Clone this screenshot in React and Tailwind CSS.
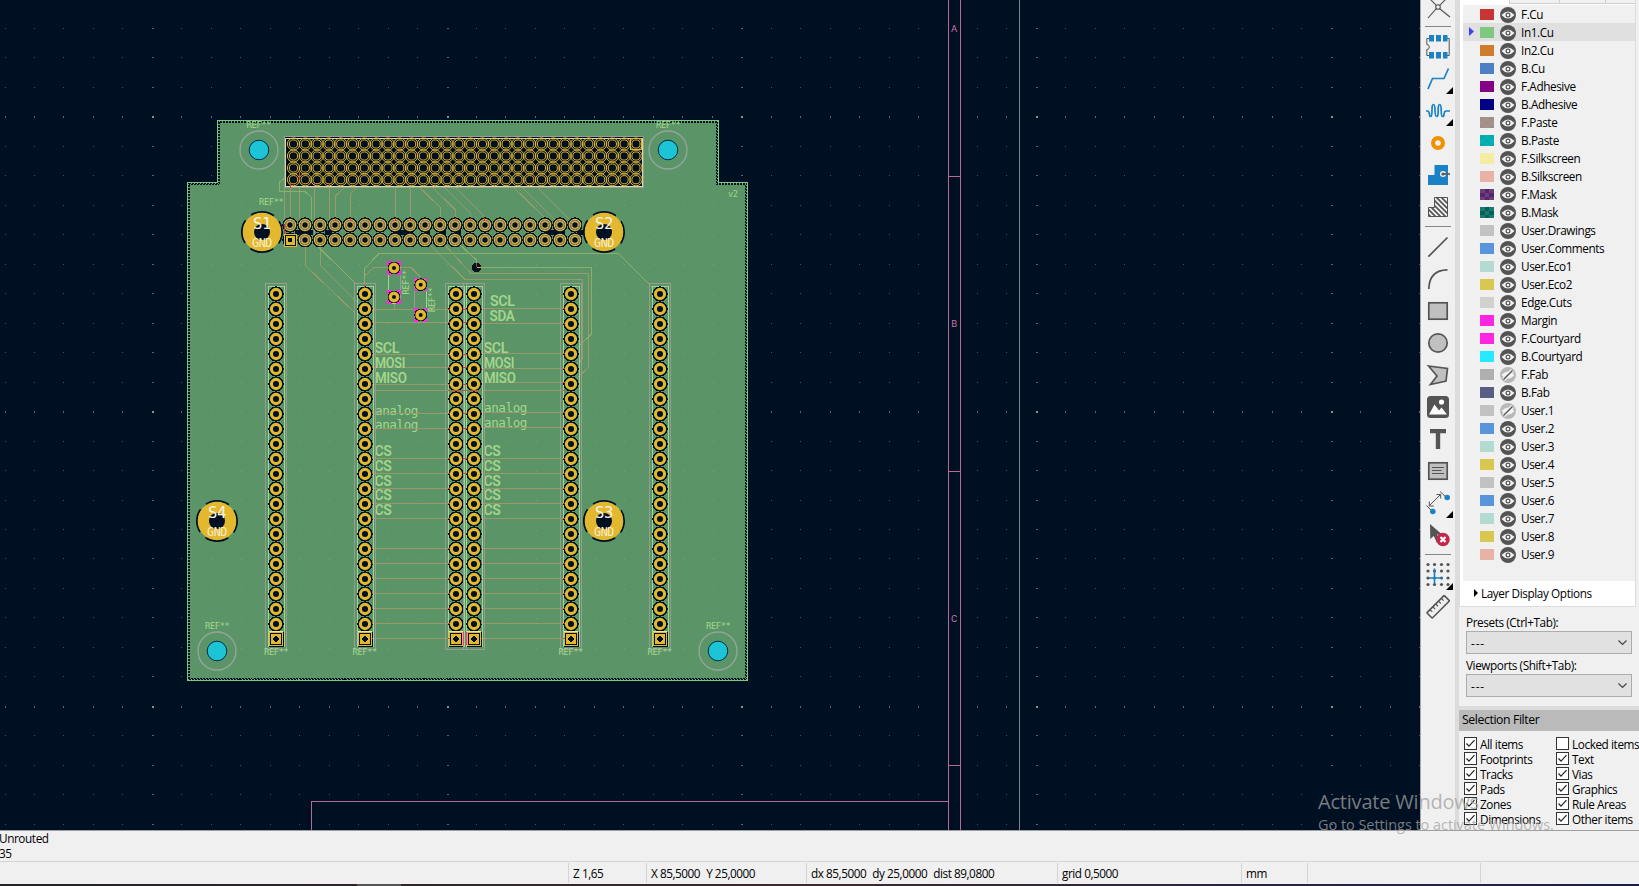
import React from "react";

const range = (n) => Array.from({ length: n }, (_, i) => i);

/* ---------- PCB canvas ---------- */

const COLS = [276, 365, 456, 474, 571, 660];
const LEFT_Y = [309.5, 322.5, 354.5, 367.5, 384.5, 390.5, 413.5, 428.5, 458.5, 473.5, 488.5, 503.5, 518.5, 548.5, 563.5, 578.5, 593.5, 608.5, 623.5, 638.5];
const RIGHT_Y = [308.5, 323.5, 353.5, 368.5, 382.5, 390.5, 412.5, 427.5, 458.5, 473.5, 488.5, 503.5, 518.5, 548.5, 563.5, 578.5, 593.5, 608.5, 623.5, 638.5];

const TRACKS = [
  "284.5,187 284.5,233",
  "290.5,183 290.5,220",
  "299.5,172 299.5,230",
  "314.5,183 314.5,243",
  "329.5,183 329.5,234 325,236",
  "320.5,244 320.5,265.5 357,302",
  "305.5,244 305.5,265.5 355,313",
  "335.5,220 335.5,196 350.5,182",
  "350.5,220 350.5,193.5 361.5,182.5",
  "395.5,188 395.5,220",
  "407.5,185 410.5,189.5 410.5,220",
  "415,183 440.5,207.5 440.5,220",
  "428,183 455.5,210 455.5,220",
  "440,183 470.5,213.5 470.5,220",
  "455,187 484.5,216.5 484.5,220",
  "508,182 545,218",
  "520,185 556,221",
  "535,185 571,221",
  "364.5,276 374,267.5 411,267.5 420.5,277",
  "430,245 465,279.5 582.5,279.5 582.5,359 576,365",
  "443,243 471,273.5 588.5,273.5 588.5,367.5 577,378",
  "394.5,303 394.5,309",
];
const LIGHT_TRACKS = [
  "286,177 279.5,182 279.5,191.5 305,191.5 311.5,197.5 311.5,240 355,283",
  "364.5,287 364.5,268.5 379,253.5 618.5,253.5 652,287",
  "458,243 476.5,260 476.5,267.5 591.5,267.5 591.5,334 577,348",
];

const MONO = "'DejaVu Sans Mono', monospace";

function Txt({ x, y, w, size = 15.5, weight = 600, fill = "#a3d68c", family = "Roboto, sans-serif", children, ...rest }) {
  return (
    <text x={x} y={y} textLength={w} lengthAdjust="spacingAndGlyphs" fontSize={size} fontWeight={weight} fill={fill} fontFamily={family} {...rest}>
      {children}
    </text>
  );
}

const Ref = ({ x, y, ...rest }) => (
  <Txt x={x} y={y} w={24.5} size={8.5} weight={400} family={MONO} {...rest}>REF**</Txt>
);

function Column({ x }) {
  return (
    <g>
      <rect x={x - 10.5} y={283.5} width={21} height={366} fill="none" stroke="#9b9a97" />
      <rect x={x - 7.5} y={286.5} width={15.5} height={360} fill="none" stroke="#a3d68c" />
      {range(23).map((i) => (
        <circle key={i} cx={x} cy={294 + i * 15} r={7.7} fill="#001023" />
      ))}
      <rect x={x - 7.5} y={631.5} width={15} height={15} fill="#001023" />
      {range(23).map((i) => (
        <circle key={i} cx={x} cy={294 + i * 15} r={4.6} fill="#001023" stroke="#e3b72e" strokeWidth={3.1} shapeRendering="auto" />
      ))}
      <rect x={x - 6.5} y={632.5} width={12.5} height={12.5} fill="#001023" stroke="#e3b72e" />
      <rect x={x - 5} y={634} width={9.5} height={9.5} fill="#e3b72e" />
      <circle cx={x} cy={639} r={2.6} fill="#001023" />
      <path d={`M${x - 7} 631.5h14`} stroke="#f0e88a" />
    </g>
  );
}

function BigPad({ x, y, name }) {
  return (
    <g>
      <circle cx={x} cy={y} r={20} fill="none" stroke="#001023" strokeWidth={2} strokeDasharray="24 7.4" strokeDashoffset={12} shapeRendering="auto" />
      <circle cx={x} cy={y} r={19.3} fill="#e3b72e" shapeRendering="auto" />
      <circle cx={x} cy={y} r={8} fill="#001023" shapeRendering="auto" />
      <Txt x={x - 9} y={y - 3.5} w={18} size={15.5} weight={400} family={MONO} fill="#f8f4e8">{name}</Txt>
      <Txt x={x - 10} y={y + 14.5} w={20} size={12} weight={400} family={MONO} fill="#f6eccb">GND</Txt>
    </g>
  );
}

const Hole = ({ x, y }) => (
  <g shapeRendering="auto">
    <circle cx={x} cy={y} r={19} fill="none" stroke="#93a59c" strokeWidth={1.4} />
    <circle cx={x} cy={y} r={10.3} fill="#1cc4d6" />
    <circle cx={x} cy={y} r={9.8} fill="none" stroke="#02263b" strokeWidth={1} />
  </g>
);

const Through = ({ x, y }) => (
  <g>
    <rect x={x - 6} y={y - 6} width={12} height={12} fill="none" stroke="#ff26e2" strokeWidth={1.2} strokeDasharray="4 4 8 4 8 4 8 4 4" />
    <circle cx={x} cy={y} r={6.4} fill="#001023" />
    <circle cx={x} cy={y} r={3.7} fill="#001023" stroke="#e3b72e" strokeWidth={3.4} shapeRendering="auto" />
  </g>
);

const BOARD = "M217.5 120.5H718.5V182.5H747.5V680.5H187.5V182.5H217.5Z";
const CLEAR = "M219 122H717V184H746V679H189V184H219Z";
const DASH = "M218.5 121.5H717.5V183.5H746.5V679.5H188.5V183.5H218.5Z";
const DASH_IN = "M219.5 122.5H716.5V184.5H745.5V678.5H189.5V184.5H219.5Z";

const PAD_Y = [144, 156, 168, 179.7];

function Board() {
  return (
    <g shapeRendering="crispEdges">
      <path d={BOARD} fill="#5b9466" stroke="#7fc882" />
      <path d={CLEAR} fill="none" stroke="#001023" strokeWidth={2} />
      <path d={DASH} fill="none" stroke="#6fae74" strokeDasharray="1 2" />
      <path d={DASH_IN} fill="none" stroke="#5b9466" strokeDasharray="1 2" strokeDashoffset={1} />
      <g fill="#74a873">
        {range(18).map((i) => range(16).map((j) => (
          <rect key={`${i}-${j}`} x={211 + Math.round(i * 29.5)} y={205 + Math.round(j * 29.5)} width={1} height={1} />
        )))}
      </g>

      {/* copper tracks */}
      <g fill="none" stroke="#99996a" strokeWidth={1}>
        {TRACKS.map((p) => <polyline key={p} points={p} />)}
        {LEFT_Y.map((y) => <path key={y} d={`M372 ${y}H449`} />)}
        {RIGHT_Y.map((y) => <path key={y} d={`M481 ${y}H564`} />)}
      </g>
      <g fill="none" stroke="#8eaf6b">{LIGHT_TRACKS.map((p) => <polyline key={p} points={p} />)}</g>

      {/* mounting holes */}
      <Hole x={259} y={150} />
      <Hole x={668} y={150} />
      <Hole x={217} y={651} />
      <Hole x={718} y={651} />

      {/* four-row connector */}
      <rect x={284.5} y={136.5} width={359} height={51} fill="#001023" stroke="#9b9a97" />
      <rect x={285.5} y={138.5} width={357} height={48} fill="none" stroke="#d3de9c" />
      <g fill="none" stroke="#e3b72e" strokeWidth={1} shapeRendering="auto">
        {range(30).map((i) => PAD_Y.map((y) => (
          <g key={`${i}-${y}`}>
            <circle cx={293.5 + i * 11.81} cy={y} r={6.1} />
            <circle cx={293.5 + i * 11.81} cy={y} r={4.1} />
          </g>
        )))}
        <rect x={630.5} y={138.5} width={11} height={11} />
      </g>

      {/* two-row header */}
      <g>
        {range(20).map((i) => range(2).map((j) => (
          <circle key={`${i}-${j}`} cx={290 + i * 15} cy={225 + j * 15} r={7.6} fill="#001023" />
        )))}
        <path d="M295 232.5H313M325 232.5H332M393 232.5H413M424 232.5H430M439 232.5H446M454 232.5H461M545 232.5H565M577 232.5H586" stroke="#001023" strokeWidth={5} />
        {range(20).map((i) => range(2).map((j) => i === 0 && j === 1 ? null : (
          <g key={`${i}-${j}`} fill="none" shapeRendering="auto">
            <circle cx={290 + i * 15} cy={225 + j * 15} r={5.6} stroke="#e3b72e" strokeWidth={1.3} />
            <circle cx={290 + i * 15} cy={225 + j * 15} r={4.4} stroke="#8288a8" strokeWidth={1.1} />
            <circle cx={290 + i * 15} cy={225 + j * 15} r={3.3} stroke="#e3b72e" strokeWidth={1.2} />
          </g>
        )))}
        <rect x={284.5} y={234.5} width={11.5} height={11.5} fill="#001023" stroke="#e3b72e" />
        <rect x={287} y={237} width={6.5} height={6.5} fill="#001023" stroke="#e3b72e" strokeWidth={2.2} />
        <path d="M284.5 224v10" stroke="#d32b2b" />
      </g>

      {/* silkscreen pin labels */}
      <Txt x={490} y={306} w={24.5}>SCL</Txt>
      <Txt x={489.5} y={321} w={25}>SDA</Txt>
      {[375, 484].map((x) => (
        <g key={x}>
          <Txt x={x - 0.5} y={353} w={24.5}>SCL</Txt>
          <Txt x={x} y={367.5} w={30}>MOSI</Txt>
          <Txt x={x} y={382.5} w={31.5}>MISO</Txt>
          <Txt x={x} y={x === 375 ? 414.5 : 412} w={43} size={12.5} weight={400} family={MONO}>analog</Txt>
          <Txt x={x} y={x === 375 ? 429 : 426.5} w={43} size={12.5} weight={400} family={MONO}>analog</Txt>
          {range(5).map((i) => <Txt key={i} x={x - 0.5} y={456 + i * 14.8} w={17}>CS</Txt>)}
        </g>
      ))}
      <g fill="none" stroke="#99996a"><path d="M375 413.5H449M375 428.5H449M484 412.5H564M484 427.5H564" /></g>

      {COLS.map((x) => <Column key={x} x={x} />)}
      <path d="M463.5 632v13M466.5 632v13" stroke="#ff26e2" />
      <g stroke="#d9432f">
        <path d="M451.5 390.5h9M469.5 390.5h9" />
        {LEFT_Y.map((y) => <path key={y} d={`M371.5 ${y}h1.5M448 ${y}h1.5`} />)}
        {LEFT_Y.slice(0, 10).map((y) => <path key={y} d={`M463 ${y}h4`} />)}
        {RIGHT_Y.map((y) => <path key={y} d={`M480.5 ${y}h1.5M563 ${y}h1.5`} />)}
        <path d="M290.5 183v5M314.5 183v3M329.5 183v3M299.5 172v8M364.5 285v3M395.5 218v3M410.5 218v3M335.5 218v3M350.5 218v3M440.5 218v3M455.5 218v3M470.5 218v3M484.5 218v3" />
      </g>

      <BigPad x={262} y={232} name="S1" />
      <BigPad x={604} y={232} name="S2" />
      <BigPad x={604} y={521} name="S3" />
      <BigPad x={217} y={521} name="S4" />

      {/* resistors and via */}
      <g fill="none">
        <path d="M388.5 262V303.5H400.5V262" stroke="#a3d68c" />
        <path d="M400.5 262V303.5" stroke="#9b9a97" />
        <path d="M414.5 279.5V321M414.5 279.5H427" stroke="#9b9a97" />
        <path d="M426.5 290V310" stroke="#a3d68c" />
      </g>
      <Through x={394} y={268} />
      <Through x={394} y={297} />
      <Through x={420.7} y={284.7} />
      <Through x={420.7} y={315} />
      <Ref x={0} y={0} transform="translate(409 294.5) rotate(-90)" />
      <Ref x={0} y={0} transform="translate(435 312) rotate(-90)" />
      <circle cx={476.5} cy={267.5} r={4.6} fill="#001023" />
      <path d="M476.5 263v4" stroke="#d32b2b" />
      <path d="M476.5 267.5h4" stroke="#e3b72e" />

      <Ref x={246.5} y={128} />
      <Ref x={656} y={128} />
      <Ref x={259} y={205} />
      <Ref x={205} y={629} />
      <Ref x={706} y={629} />
      {[264, 352.5, 558.5, 647.5].map((x) => <Ref key={x} x={x} y={655} />)}
      <Txt x={728} y={197} w={9.5} size={9.5} weight={400} family={MONO}>v2</Txt>
    </g>
  );
}

function Canvas() {
  return (
    <svg width={1420} height={830} viewBox="0 0 1420 830" className="block shrink-0 bg-[#001023]">
      <g shapeRendering="crispEdges">
        {range(49).map((i) => range(28).map((j) => {
          const mi = (i - 5) % 10 === 0;
          const mj = (j - 3) % 10 === 0;
          return (
            <rect key={`${i}-${j}`} x={Math.round(4.5 + i * 29.47)} y={Math.round(28 + j * 29.47)} width={mi ? 2 : 1} height={mj ? 2 : 1} fill={mi && mj ? "#8b9096" : mi || mj ? "#5c656d" : "#46515b"} />
          );
        }))}
        <path d="M948.5 0V830M960.5 0V830M948.5 176.5H960.5M948.5 471.5H960.5M948.5 765.5H960.5M311.5 830V801.5H948.5" fill="none" stroke="#b56a9a" />
        <path d="M1019.5 0V830" stroke="#7d858b" />
      </g>
      <g fill="#c872a5" fontSize={9.5} fontFamily="Roboto, sans-serif" textAnchor="middle">
        <text x={954} y={32}>A</text>
        <text x={954} y={327}>B</text>
        <text x={954} y={622}>C</text>
      </g>
      <Board />
    </svg>
  );
}

/* ---------- right-hand toolbar ---------- */

const D = "#545454";
const B = "#1a81c4";

const ICONS = {
  ratsnest: <g fill="none" stroke={D} strokeWidth="1.1"><circle cx="12" cy="12" r="2.3" /><path d="M10.3 10.3L2 2M13.7 10.3L22 2M10.3 13.7L2 23M13.7 13.7L24 22" /></g>,
  footprint: <g><path d="M4 3.5H.8V9.5a2.3 2.3 0 0 1 0 5V20.5H4M20 3.5h3.2V20.5H20" fill="none" stroke={D} /><path d="M3 0h5v6.5H3zM10 0h5v6.5h-5zM17 0h4.5v6.5H17zM3 17h5v6.5H3zM10 17h5v6.5h-5zM17 17h4.5v6.5H17z" fill={B} /></g>,
  route: <path d="M2 22L6.5 11.5H18L22.5 1.5" fill="none" stroke={B} strokeWidth="1.7" />,
  tune: <path d="M0 12h1.5c3 0 1 5.5 3 5.5 3 0 0-12 3-12s0 12 3.2 12c3 0 0-12 3-12s0 12 3 12c2.5 0 0-5.5 3.5-5.5H24" fill="none" stroke={B} strokeWidth="1.7" />,
  via: <circle cx="12" cy="12" r="4.9" fill="none" stroke="#f29100" strokeWidth="4.2" />,
  zone: <g><path d="M8.5 2H22v20H2V12h6.5z" fill={B} /><circle cx="17" cy="11" r="3" fill="#f0f0f0" /><path d="M16 11h8" stroke={D} strokeWidth="1.6" /><circle cx="17" cy="11" r="1.6" fill={D} /></g>,
  rule: <g><defs><clipPath id="ruleClip"><path d="M8.5 2H22v20H2V12h6.5z" /></clipPath></defs><path d="M-8 4l22 22M-3 4l22 22M2 4l22 22M-1 -4l26 26M4 -4l26 26M9 -4l26 26M-13 4l22 22" stroke={D} strokeWidth="1.7" clipPath="url(#ruleClip)" /><path d="M8.5 2.5H21.5v19H2.5V12.5h6z" fill="none" stroke={D} /></g>,
  line: <path d="M2.3 21.7L21.5 2.5" stroke={D} strokeWidth="1.7" />,
  arc: <path d="M2.8 22C3 10 9 3 21.5 2.8" fill="none" stroke={D} strokeWidth="1.7" />,
  rect: <rect x="2.8" y="3.8" width="18.4" height="16.4" fill="#c0c0c0" stroke={D} strokeWidth="1.7" />,
  circle: <circle cx="12" cy="12" r="9.2" fill="#c0c0c0" stroke={D} strokeWidth="1.7" />,
  poly: <path d="M2.5 3L21.5 5.5L20 18L4.5 21.5L11 13z" fill="#c0c0c0" stroke={D} strokeWidth="1.7" />,
  image: <g><rect x="1" y="1" width="22" height="22" rx="3.5" fill={D} /><path d="M3 19.5L8.5 9.5L13 15.5L15.5 12.5L21 19.5z" fill="#fff" /><circle cx="15.5" cy="7" r="2.6" fill="#fff" /></g>,
  text: <path d="M4 2h16v4.2h-5.8V22H9.8V6.2H4z" fill={D} />,
  textbox: <g><rect x="2.8" y="3.8" width="18.4" height="16.4" fill="#c0c0c0" stroke={D} strokeWidth="1.7" /><path d="M6 8.5h12M6 11.5h9.5M6 14.5h12" stroke={D} strokeWidth="1.1" /></g>,
  dimension: <g><path d="M3.5 14.5L14.5 3.5M3.3 10.5v4.5h4.5M10.5 3.5h4.2v4" fill="none" stroke={D} /><path d="M.5 14.5L7 21M14 .5L21 7" stroke={D} /><circle cx="6.8" cy="20.5" r="2.8" fill={B} /><circle cx="21.2" cy="6.5" r="2.8" fill={B} /></g>,
  del: <g><path d="M4 1L4.3 16L7.8 13L11 20L14 18.5L11 11.8L15.5 11z" fill={D} /><circle cx="17" cy="16.5" r="6.7" fill="#c4254a" /><path d="M14.5 14l5 5M19.5 14l-5 5" stroke="#fff" strokeWidth="2.2" /></g>,
  grid: <g><g fill={D}>{[2, 8.5, 15.5, 22].map((x) => [1.5, 8, 15, 21.5].map((y) => <circle key={`${x}-${y}`} cx={x} cy={y} r="1.6" />))}</g><path d="M8.5 5.5V21M3 15H17" stroke={B} strokeWidth="1.6" /></g>,
  ruler: <g transform="rotate(-45 12 12)" fill="none" stroke={D} strokeWidth="1.6"><rect x="0" y="8.2" width="24.5" height="7.6" rx=".6" /><path d="M4.5 8.5v3M8.5 8.5v3M12.5 8.5v3M16.5 8.5v3M20.5 8.5v3" strokeWidth="1.2" /></g>,
};

const TOOLS = ["ratsnest", "-", "footprint", "route>", "tune>", "via", "zone", "rule", "-", "line", "arc", "rect", "circle", "poly", "image", "text", "textbox", "dimension>", "del", "-", "grid>", "ruler"];

function Toolbar() {
  return (
    <div className="flex w-[35px] shrink-0 flex-col overflow-hidden border-l border-[#a8a8a8] bg-[#f0f0f0]">
      <div className="-mt-[9px] flex flex-col">
        {TOOLS.map((t, i) => {
          if (t === "-") return <div key={i} className="flex h-2 shrink-0 items-start pl-1 pt-[3px]"><div className="h-px w-[26px] bg-[#868686]" /></div>;
          const more = t.endsWith(">");
          return (
            <div key={i} className="relative flex h-8 shrink-0 items-center pl-[5px]">
              <svg width="24" height="24" viewBox="0 0 24 24" className="overflow-visible">{ICONS[t.replace(">", "")]}</svg>
              {more && <svg width="7" height="7" className="absolute bottom-[1px] left-[25px]"><path d="M7 0V7H0z" fill="#000" /></svg>}
            </div>
          );
        })}
      </div>
    </div>
  );
}

/* ---------- appearance panel ---------- */

const LAYERS = [
  ["F.Cu", "#c83434"], ["In1.Cu", "#7fc87f"], ["In2.Cu", "#ce7d2c"], ["B.Cu", "#4d7fc4"],
  ["F.Adhesive", "#840084"], ["B.Adhesive", "#000084"], ["F.Paste", "#a4928b", "#a08e87"], ["B.Paste", "#00b4b4", "#06a9a9"],
  ["F.Silkscreen", "#f2eda1"], ["B.Silkscreen", "#e8b2a7"], ["F.Mask", "#54266a", "#6d3d7f"], ["B.Mask", "#026259", "#1b7a70"],
  ["User.Drawings", "#c2c2c2"], ["User.Comments", "#5994dc"], ["User.Eco1", "#b4dbd2"], ["User.Eco2", "#d8c852"],
  ["Edge.Cuts", "#d0d2cd"], ["Margin", "#ff26e2"], ["F.Courtyard", "#ff26e2"], ["B.Courtyard", "#26e9ff"],
  ["F.Fab", "#afafaf"], ["B.Fab", "#585d84"], ["User.1", "#c2c2c2"], ["User.2", "#5994dc"], ["User.3", "#b4dbd2"],
  ["User.4", "#d8c852"], ["User.5", "#c2c2c2"], ["User.6", "#5994dc"], ["User.7", "#b4dbd2"], ["User.8", "#d8c852"], ["User.9", "#e8b2a7"],
];
const HIDDEN = ["F.Fab", "User.1"];

const Eye = () => (
  <svg width="16" height="16" viewBox="0 0 16 16">
    <circle cx="8" cy="8" r="8" fill={D} />
    <path d="M1.5 8Q8 .8 14.5 8Q8 15.2 1.5 8z" fill="#f4f4f4" />
    <circle cx="8" cy="8" r="1.9" fill="#f4f4f4" stroke={D} strokeWidth="1.2" />
  </svg>
);
const EyeOff = () => (
  <svg width="16" height="16" viewBox="0 0 16 16">
    <circle cx="8" cy="8" r="8" fill="#b8b8b8" />
    <path d="M1.5 8Q8 .8 14.5 8Q8 15.2 1.5 8z" fill="#f4f4f4" />
    <path d="M3.5 12.5L12.5 3.5" stroke="#f4f4f4" strokeWidth="4" />
    <path d="M3.5 12.5L12.5 3.5" stroke={D} strokeWidth="1.5" />
  </svg>
);

function Swatch({ a, b }) {
  return (
    <svg width="14" height="11" shapeRendering="crispEdges" className="mb-px">
      <rect width="14" height="11" fill={a} />
      {b && <path d="M0 0h5v4h-5zM9 0h5v4H9zM5 4h4v4H5zM0 8h5v3H0zM9 8h5v3H9z" fill={b} />}
    </svg>
  );
}

function Select() {
  return (
    <div className="flex h-[23px] w-[166px] items-center justify-between border border-[#adadad] bg-[#e1e1e1] pl-1 pr-1">
      <span className="tracking-[0.9px]">---</span>
      <svg width="9" height="6" viewBox="0 0 9 6"><path d="M.5 .5L4.5 4.5L8.5 .5" fill="none" stroke="#444" strokeWidth="1.2" /></svg>
    </div>
  );
}

const FILTERS = [
  ["All items", true, "Locked items", false], ["Footprints", true, "Text", true], ["Tracks", true, "Vias", true],
  ["Pads", true, "Graphics", true], ["Zones", true, "Rule Areas", true], ["Dimensions", true, "Other items", true],
];

function Check({ label, on }) {
  return (
    <div className="flex h-[15px] items-center gap-[3px] whitespace-nowrap">
      <svg width="13" height="13" viewBox="0 0 13 13" className="shrink-0">
        <rect x=".5" y=".5" width="12" height="12" fill="#fff" stroke="#333" />
        {on && <path d="M2.5 6.5L5 9.2L10.5 3.2" fill="none" stroke="#222" strokeWidth="1.2" />}
      </svg>
      <span>{label}</span>
    </div>
  );
}

function Panel() {
  return (
    <div className="flex w-[184px] shrink-0 overflow-hidden bg-[#f0f0f0]">
      <div className="w-1 shrink-0 bg-[#dcdcdc]" />
      <div className="flex w-[180px] shrink-0 flex-col">
        <div className="flex h-[607px] w-[177px] shrink-0 flex-col border-x border-b border-[#dcdcdc] bg-white">
          <div className="flex h-1 shrink-0 justify-end">
            <div className="h-full w-[50px] border-b border-l border-[#d0d0d0] bg-[#f0f0f0]" />
            <div className="h-full w-[46px] border-b border-l border-[#d0d0d0] bg-[#f0f0f0]" />
            <div className="h-full w-[30px] border-b border-l border-[#d0d0d0] bg-[#f0f0f0]" />
          </div>
          <div className="mt-px ml-[3px] flex h-[576px] w-[172px] shrink-0 flex-col bg-[#f0f0f0]">
            {LAYERS.map(([name, a, b], i) => (
              <div key={name} className={i === 1 ? "flex h-[18px] shrink-0 items-center bg-[#e0e0e0] pt-px" : "flex h-[18px] shrink-0 items-center pt-px"}>
                <div className="flex w-[17px] shrink-0 pl-[6px]">
                  {i === 1 && <svg width="5" height="9" className="mb-[2px]"><path d="M0 0L5 4.5L0 9z" fill="#4040f0" /></svg>}
                </div>
                <Swatch a={a} b={b} />
                <div className="ml-[6px] mr-[5px]">{HIDDEN.includes(name) ? <EyeOff /> : <Eye />}</div>
                <span className="pb-px">{name}</span>
              </div>
            ))}
          </div>
          <div className="flex flex-1 items-center gap-[3px] pb-[2px] pl-[14px]">
            <svg width="4" height="8"><path d="M0 0L4 4L0 8z" fill="#000" /></svg>
            <span>Layer Display Options</span>
          </div>
        </div>
        <div className="flex h-[99px] shrink-0 flex-col pl-[7px]">
          <div className="mt-[6px] flex h-[18px] items-center pb-px">Presets (Ctrl+Tab):</div>
          <Select />
          <div className="mt-[2px] flex h-[18px] items-center pb-px">Viewports (Shift+Tab):</div>
          <Select />
        </div>
        <div className="h-1 shrink-0 bg-[#dcdcdc]" />
        <div className="flex h-[21px] shrink-0 items-center bg-[#bababa] pb-px pl-[3px] text-[12.25px]">Selection Filter</div>
        <div className="flex flex-col pl-[5px] pt-[5px]">
          {FILTERS.map(([l, lo, r, ro]) => (
            <div key={l} className="flex">
              <div className="w-[92px] shrink-0"><Check label={l} on={lo} /></div>
              <Check label={r} on={ro} />
            </div>
          ))}
        </div>
      </div>
    </div>
  );
}

/* ---------- bottom bars ---------- */

function StatusBar() {
  const cell = "flex h-5 shrink-0 items-center gap-[6px] border-l border-[#d4d4d4] pl-1 pt-px";
  return (
    <div className="flex h-[22px] shrink-0 items-center border-t border-[#d4d4d4] tracking-[-0.45px]">
      <div className="w-[568px] shrink-0" />
      <div className={`${cell} w-[78px]`}>Z 1,65</div>
      <div className={`${cell} w-[160px]`}><span>X 85,5000</span><span>Y 25,0000</span></div>
      <div className={`${cell} w-[251px]`}><span>dx 85,5000</span><span>dy 25,0000</span><span>dist 89,0800</span></div>
      <div className={`${cell} w-[184px]`}>grid 0,5000</div>
      <div className={`${cell} w-[66px]`}>mm</div>
      <div className={`${cell} w-[173px]`} />
      <div className={`${cell} w-[158px]`} />
    </div>
  );
}

export default function App() {
  return (
    <div className="relative flex h-[886px] w-[1639px] flex-col overflow-hidden bg-[#f0f0f0] font-['Open_Sans','Noto_Sans',sans-serif] text-[11.75px] leading-[14px] tracking-[-0.4px] text-black">
      <div className="flex h-[830px] shrink-0">
        <Canvas />
        <Toolbar />
        <Panel />
      </div>
      <div className="flex h-[31px] shrink-0 flex-col border-t border-[#a0a0a0]">
        <div className="-ml-px h-[15px]">Unrouted</div>
        <div className="-ml-px h-[15px]">35</div>
      </div>
      <StatusBar />
      <div className="mt-px flex h-[2px] shrink-0 bg-gradient-to-r from-[#222126] via-[#3c2a30] to-[#1b1c4a]">
        <div className="ml-[357px] w-11 bg-[#555]" />
      </div>
      <div className="pointer-events-none absolute left-[1318px] top-[788px] flex flex-col whitespace-nowrap text-[#a0a0a0]/75">
        <span className="text-[20px] leading-[28px] tracking-[-0.2px]">Activate Windows</span>
        <span className="text-[14.5px] leading-[18px] tracking-[-0.05px]">Go to Settings to activate Windows.</span>
      </div>
    </div>
  );
}
